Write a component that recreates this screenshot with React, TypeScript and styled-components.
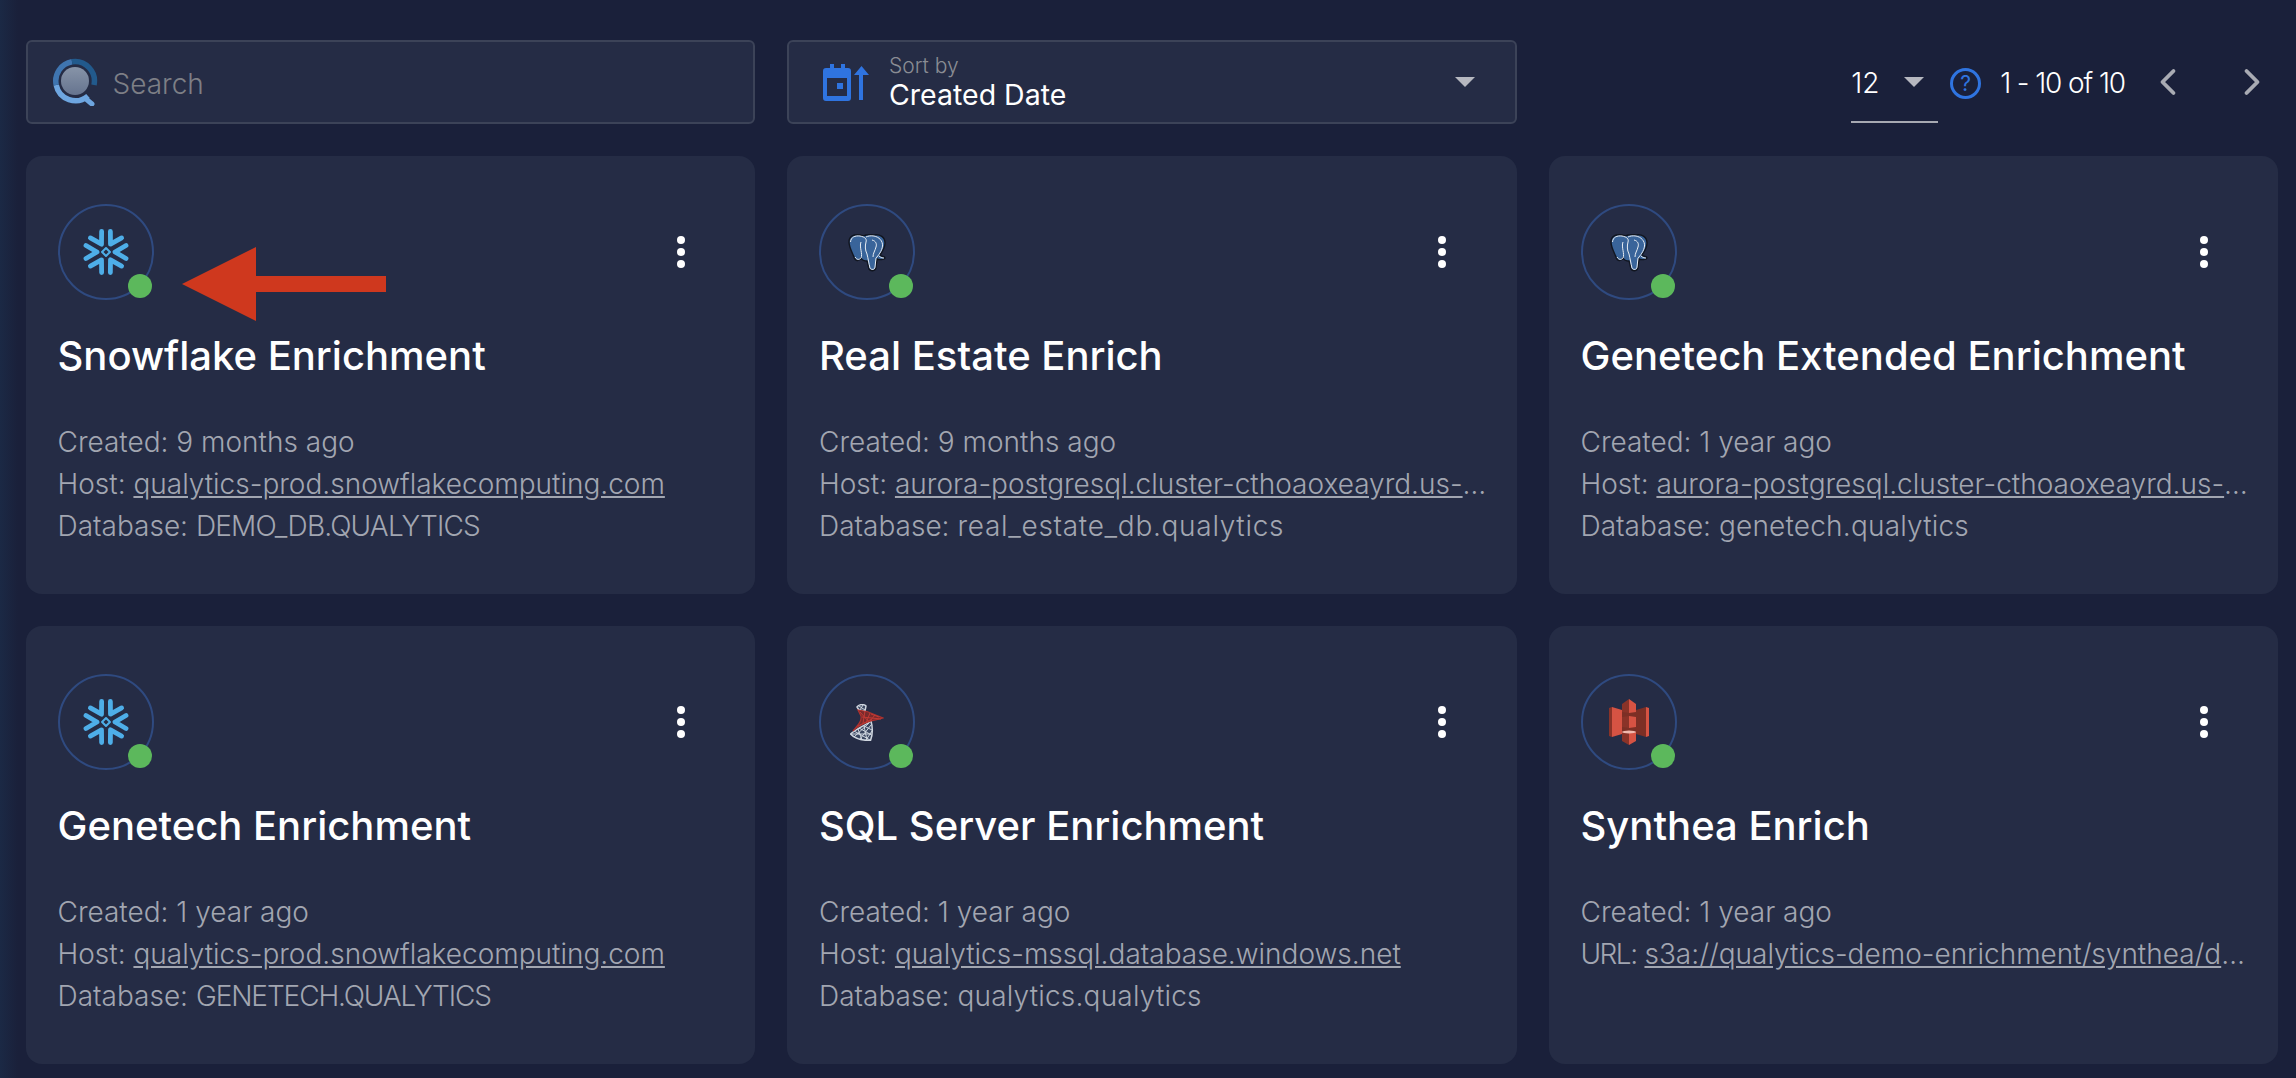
import React, { FC } from 'react';
import styled, { createGlobalStyle } from 'styled-components';
import { FiChevronLeft, FiChevronRight } from 'react-icons/fi';

const GlobalStyle = createGlobalStyle`
    html, body {
        margin: 0;
        background: #1a203a;
    }
    body {
        font-family: Inter, "Liberation Sans", sans-serif;
        color: #fff;
    }
`;

type Kind = 'snowflake' | 'postgres' | 'sqlserver' | 's3';

interface Connection {
    name: string;
    kind: Kind;
    created: string;
    label: string;
    link: string;
    extra?: string;
    tracking?: number;
    arrow?: boolean;
}

const connections: Connection[] = [
    { name: 'Snowflake Enrichment', kind: 'snowflake', created: '9 months ago', label: 'Host', link: 'qualytics-prod.snowflakecomputing.com', extra: 'DEMO_DB.QUALYTICS', tracking: -0.8, arrow: true },
    { name: 'Real Estate Enrich', kind: 'postgres', created: '9 months ago', label: 'Host', link: 'aurora-postgresql.cluster-cthoaoxeayrd.us-east-1.rds.amazonaws.com', extra: 'real_estate_db.qualytics', tracking: 0.7 },
    { name: 'Genetech Extended Enrichment', kind: 'postgres', created: '1 year ago', label: 'Host', link: 'aurora-postgresql.cluster-cthoaoxeayrd.us-east-1.rds.amazonaws.com', extra: 'genetech.qualytics', tracking: 0.2 },
    { name: 'Genetech Enrichment', kind: 'snowflake', created: '1 year ago', label: 'Host', link: 'qualytics-prod.snowflakecomputing.com', extra: 'GENETECH.QUALYTICS', tracking: -1.1 },
    { name: 'SQL Server Enrichment', kind: 'sqlserver', created: '1 year ago', label: 'Host', link: 'qualytics-mssql.database.windows.net', extra: 'qualytics.qualytics', tracking: 0.2 },
    { name: 'Synthea Enrich', kind: 's3', created: '1 year ago', label: 'URL', link: 's3a://qualytics-demo-enrichment/synthea/data/enrichment/files' },
];

const SearchLogo: FC = () => (
    <svg width="46" height="48" viewBox="0 0 46 48" fill="none">
        <defs>
            <linearGradient id="lens" x1="0" y1="0" x2="0" y2="1">
                <stop offset="0" stopColor="#8794a8" />
                <stop offset="1" stopColor="#66748f" />
            </linearGradient>
        </defs>
        <circle cx="23" cy="23" r="14" fill="url(#lens)" />
        <path d="M34 41 L40 46" stroke="#6ea6e0" strokeWidth="5" strokeLinecap="round" />
        <path d="M4.200 27 A19.500 19.500 0 0 0 36 38" stroke="#6ea6e0" strokeWidth="5.500" />
        <path d="M4.200 27 A19.500 19.500 0 0 1 20 3.800" stroke="#3f75b0" strokeWidth="5.500" />
        <path d="M20 3.800 A19.500 19.500 0 0 1 42 27" stroke="#225a8c" strokeWidth="5.500" />
    </svg>
);

const CalendarSort: FC = () => (
    <svg width="46" height="37" viewBox="0 0 46 37" fill="#2f74e0">
        <path d="M3 4 h4 v-4 h4 v4 h7 v-4 h4 v4 h3 a3 3 0 0 1 3 3 v27 a3 3 0 0 1 -3 3 h-22 a3 3 0 0 1 -3 -3 v-27 a3 3 0 0 1 3 -3 Z M4 14 v18 h20 v-18 Z" />
        <rect x="14" y="19" width="6" height="6" />
        <path d="M36 36 v-25 h-5 l7.500 -9 l7.500 9 h-6 v25 Z" />
    </svg>
);

const SnowflakeLogo: FC = () => (
    <svg width="46" height="46" viewBox="-23 -23 46 46" fill="none" stroke="#4eaee8" strokeWidth="4.800" strokeLinecap="round" strokeLinejoin="round">
        {[0, 60, 120, 180, 240, 300].map((deg) => (
            <path key={deg} transform={`rotate(${deg})`} d="M20 -6.500 L9 0 L20 6.500" />
        ))}
        <rect x="-2.800" y="-2.800" width="5.600" height="5.600" strokeWidth="2" transform="rotate(45)" />
    </svg>
);

const PostgresLogo: FC = () => (
    <svg width="38" height="39" viewBox="-1 -1 38 39">
        <path d="M0 8 C0 2 5 0 11 1 C14 2 15 2 17 1 C20 0 23 1 25 1 C31 0 36 3 36 9 C36 14 33 18 31 21 C33 23 36 22 36 24 C35 26 30 26 28 25 L27 33 C27 37 22 38 20 35 C19 32 19 29 18 27 C15 27 13 26 12 24 C10 28 6 27 5 23 C3 18 0 13 0 8 Z" fill="#39649a" stroke="#11151f" strokeWidth="1.400" />
        <path d="M1.500 8 C2 3 6 1.500 11 2 C16 3 18 5 17 8 C16 12 16 16 18 20 C19 24 20 30 21 34 C22 36 26 36 26 33 L27 24 C29 22 33 17 33.500 12 C34 7 30 3 25 2 C22 1.500 19 2 17 3 M12 24 C14 20 10 13 12 8 M23 6 C27 7 28 10 27 13 C26 17 24 19 24 23 M30 22 C32 24 34 24 35 24 M6 23 C8 26 10 26 12 24" fill="none" stroke="#e8edf3" strokeWidth="1" />
    </svg>
);

const SqlServerLogo: FC = () => (
    <svg width="34" height="37" viewBox="0 0 34 37" fill="none">
        <path d="M7 3 C9 0 14 0 16 2 L15 7 L9 6 Z" fill="#3a4660" stroke="#cfd6df" strokeWidth="1.500" />
        <path d="M9 2 L15 6 M13 1 L10 6" stroke="#cfd6df" strokeWidth="1" />
        <path d="M0.500 30 C6 25 14 22 21 17 C23 24 22.500 31 20.500 36.500 C12 36.500 4 34 0.500 30 Z" fill="#3a4660" stroke="#cfd6df" strokeWidth="1.500" />
        <path d="M4 27 L20 36 M9 24 L21.500 31 M14 22 L22 26 M4 33 L19 19 M10 35 L21 21 M16 36 L22 27 M8 25 L12 36 M14 22 L17 36 M1 30 L21 30" stroke="#cfd6df" strokeWidth="1" />
        <path d="M8 6 L17 7.500 L33 14 C27 16 22 16 18 18 C12 20 7 23 3 27 C8 21 12 17 11 12 Z" fill="#7a2a2c" stroke="#ad322f" strokeWidth="1.200" />
        <path d="M10 8 L19 18 M15 7 L13 19 M20 9 L16 19 M25 11 L20 17 M29 13 L21 10 M12 13 L31 15 M8 22 L22 15" stroke="#c23a35" strokeWidth="1" />
    </svg>
);

const S3Logo: FC = () => (
    <svg width="40" height="46" viewBox="0 0 40 46">
        <rect x="13" y="12" width="14" height="22" fill="#7c2f25" />
        <path d="M0 9 L3 8 L3 38 L0 37 Z" fill="#8a3328" />
        <path d="M3 8 L13 11 L13 35 L3 38 Z" fill="#d65343" />
        <path d="M27 11 L37 8 L37 38 L27 35 Z" fill="#7c2f25" />
        <path d="M37 8 L40 9 L40 37 L37 38 Z" fill="#d65343" />
        <path d="M13 5 L20 0 L20 14 L13 13 Z" fill="#8a3328" />
        <path d="M20 0 L27 5 L27 13 L20 14 Z" fill="#d65343" />
        <path d="M13 18 L20 17 L20 29 L13 28 Z" fill="#8a3328" />
        <path d="M20 17 L27 18 L27 28 L20 29 Z" fill="#d65343" />
        <path d="M13 33 L20 34 L20 46 L13 42 Z" fill="#8a3328" />
        <path d="M20 34 L27 33 L27 42 L20 46 Z" fill="#d65343" />
        <ellipse cx="20" cy="33" rx="7" ry="1.500" fill="#f0b8ad" />
    </svg>
);

const SourceIcon: FC<{ kind: Kind }> = ({ kind }) => {
    if (kind === 'snowflake') return <SnowflakeLogo />;
    if (kind === 'postgres') return <PostgresLogo />;
    if (kind === 'sqlserver') return <SqlServerLogo />;
    return <S3Logo />;
};

const Card: FC<{ item: Connection }> = ({ item }) => (
    <CardBox>
        <CardHead>
            <Avatar>
                <SourceIcon kind={item.kind} />
                <StatusDot />
            </Avatar>
            <MoreButton>
                <i />
                <i />
                <i />
            </MoreButton>
        </CardHead>
        {item.arrow && (
            <Arrow width="204" height="74" viewBox="0 0 204 74">
                <path d="M0 37 L74 0 V29 H204 V45 H74 V74 Z" fill="#cf381e" />
            </Arrow>
        )}
        <Title>{item.name}</Title>
        <Meta>
            <div>Created: {item.created}</div>
            <div>
                <Label $tight={item.label === 'URL'}>{item.label}:</Label> <a href="#">{item.link}</a>
            </div>
            {item.extra && (
                <div>
                    Database: <Value $tracking={item.tracking ?? 0}>{item.extra}</Value>
                </div>
            )}
        </Meta>
    </CardBox>
);

const App: FC = () => (
    <Page>
        <GlobalStyle />
        <Toolbar>
            <Field $inset={24} $gap={15}>
                <SearchLogo />
                <Placeholder>Search</Placeholder>
            </Field>
            <Field $inset={34} $gap={20}>
                <CalendarSort />
                <SortText>
                    <small>Sort by</small>
                    <span>Created Date</span>
                </SortText>
                <Caret />
            </Field>
            <Pager>
                <PageSize>
                    <span>12</span>
                    <Caret />
                </PageSize>
                <Help>?</Help>
                <PageRange>1 - 10 of 10</PageRange>
                <PagerArrows>
                    <FiChevronLeft size={44} strokeWidth={2.1} />
                    <FiChevronRight size={44} strokeWidth={2.1} />
                </PagerArrows>
            </Pager>
        </Toolbar>
        <Grid>
            {connections.map((c) => (
                <Card key={c.name} item={c} />
            ))}
        </Grid>
    </Page>
);

export default App;

const Page = styled.div`
    box-sizing: border-box;
    height: 1078px;
    overflow: hidden;
    padding: 40px 17px 0 25.5px;
    background: linear-gradient(90deg, #1b2945 0, #1a203a 18px);
`;

const Toolbar = styled.div`
    display: grid;
    grid-template-columns: repeat(3, 729.5px);
    column-gap: 32px;
    margin-bottom: 32px;
`;

const Field = styled.div<{ $inset: number; $gap: number }>`
    box-sizing: border-box;
    height: 84px;
    display: flex;
    align-items: center;
    gap: ${(p) => p.$gap}px;
    padding: 0 40px 0 ${(p) => p.$inset}px;
    background: #252c45;
    border: 2px solid #3c4358;
    border-radius: 6px;
`;

const Placeholder = styled.span`
    margin-top: 3px;
    font-size: 28px;
    font-weight: 300;
    color: #7d7f86;
`;

const SortText = styled.div`
    flex: 1;
    display: flex;
    flex-direction: column;
    > small {
        font-size: 21px;
        font-weight: 300;
        color: #8a8c94;
    }
    > span {
        margin-top: -1px;
        font-size: 28.5px;
        font-weight: 400;
        color: #fff;
    }
`;

const Caret = styled.span`
    width: 0;
    height: 0;
    border-left: 10px solid transparent;
    border-right: 10px solid transparent;
    border-top: 10px solid #b6b8c0;
`;

const Pager = styled.div`
    display: flex;
    align-items: center;
    justify-content: flex-end;
    padding-right: 4px;
`;

const PageSize = styled.div`
    box-sizing: border-box;
    width: 87px;
    height: 80px;
    margin-top: 2px;
    display: flex;
    align-items: center;
    justify-content: space-between;
    padding-right: 14px;
    border-bottom: 2px solid #a7a9b2;
    font-size: 28px;
    font-weight: 300;
    > span:first-child {
        margin-top: 2px;
    }
`;

const Help = styled.span`
    box-sizing: border-box;
    width: 31px;
    height: 31px;
    margin: 2px 0 0 12px;
    border: 3px solid #2f74e0;
    border-radius: 50%;
    display: flex;
    align-items: center;
    justify-content: center;
    font-size: 21px;
    color: #2f74e0;
`;

const PageRange = styled.span`
    margin: 2px 0 0 19px;
    font-size: 28px;
    font-weight: 300;
    letter-spacing: -1.1px;
`;

const PagerArrows = styled.div`
    display: flex;
    gap: 40px;
    margin-left: 21px;
    color: #a9abb3;
`;

const Grid = styled.div`
    display: grid;
    grid-template-columns: repeat(3, 729.5px);
    gap: 32px;
`;

const CardBox = styled.div`
    position: relative;
    box-sizing: border-box;
    height: 438px;
    padding: 48px 32px 0;
    background: #252c45;
    border-radius: 16px;
    min-width: 0;
`;

const CardHead = styled.div`
    display: flex;
    justify-content: space-between;
    align-items: center;
`;

const Avatar = styled.div`
    position: relative;
    box-sizing: border-box;
    width: 96px;
    height: 96px;
    display: flex;
    align-items: center;
    justify-content: center;
    border: 2px solid #2f4a80;
    border-radius: 50%;
`;

const StatusDot = styled.span`
    position: absolute;
    right: 0;
    bottom: 0;
    width: 24px;
    height: 24px;
    border-radius: 50%;
    background: #5cb85c;
`;

const MoreButton = styled.div`
    display: flex;
    flex-direction: column;
    gap: 4px;
    margin-right: 38.5px;
    > i {
        width: 8px;
        height: 8px;
        border-radius: 50%;
        background: #fff;
    }
`;

const Arrow = styled.svg`
    position: absolute;
    left: 156px;
    top: 91px;
`;

const Title = styled.h2`
    margin: 31px 0 0;
    font-size: 40px;
    font-weight: 500;
    line-height: 50px;
    color: #fff;
    white-space: nowrap;
`;

const Meta = styled.div`
    margin: 40px -4px 0 0;
    font-size: 28px;
    font-weight: 300;
    line-height: 42px;
    color: #a2a6b1;
    > div {
        white-space: nowrap;
        overflow: hidden;
        text-overflow: ellipsis;
    }
    a {
        color: inherit;
    }
`;

const Label = styled.span<{ $tight: boolean }>`
    letter-spacing: ${(p) => (p.$tight ? '-1.5px' : 'normal')};
`;

const Value = styled.span<{ $tracking: number }>`
    letter-spacing: ${(p) => p.$tracking}px;
`;
